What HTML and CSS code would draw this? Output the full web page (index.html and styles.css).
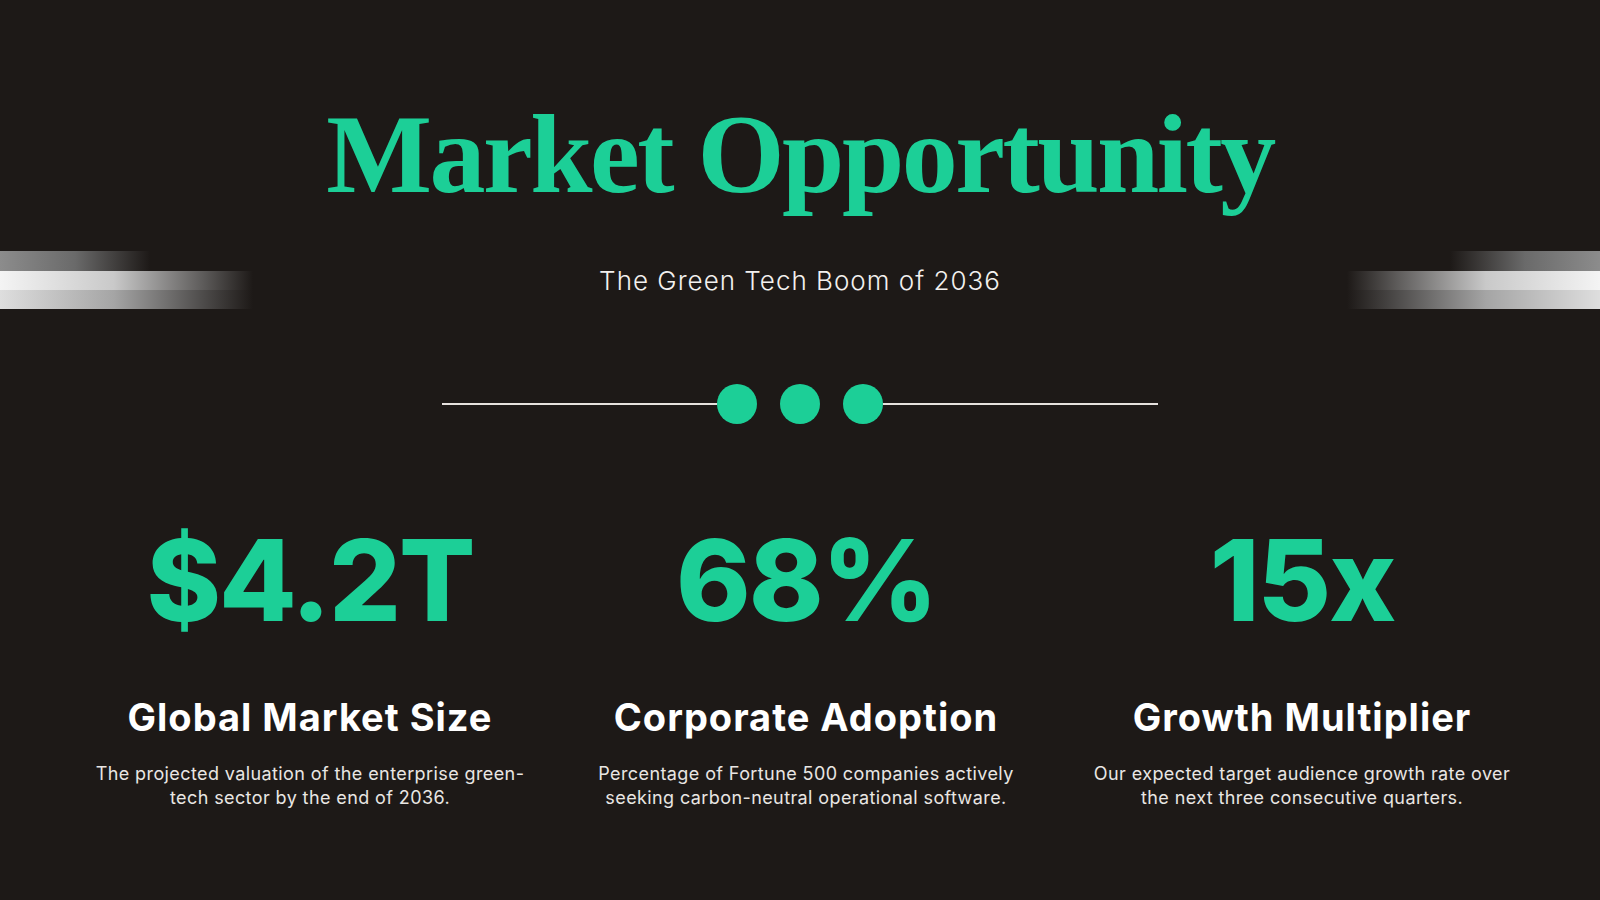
FILE: index.html
```html
<!DOCTYPE html>
<html lang="en">
<head>
<meta charset="utf-8">
<title>Market Opportunity</title>
<link rel="stylesheet" href="styles.css">
</head>
<body>
<main class="slide">
  <h1 class="title">Market Opportunity</h1>
  <div class="band">
    <div class="bars bars-left">
      <span class="bar bar-short"></span>
      <span class="bar bar-long bar-light"></span>
      <span class="bar bar-long bar-mid"></span>
    </div>
    <p class="subtitle">The Green Tech Boom of 2036</p>
    <div class="bars bars-right">
      <span class="bar bar-short"></span>
      <span class="bar bar-long bar-light"></span>
      <span class="bar bar-long bar-mid"></span>
    </div>
  </div>
  <div class="divider">
    <span class="rule"></span>
    <span class="dot"></span>
    <span class="dot"></span>
    <span class="dot"></span>
    <span class="rule"></span>
  </div>
  <section class="stats">
    <article class="stat">
      <div class="stat-value">$4.2T</div>
      <h2 class="stat-title">Global Market Size</h2>
      <p class="stat-text">The projected valuation of the enterprise green-<br>tech sector by the end of 2036.</p>
    </article>
    <article class="stat">
      <div class="stat-value">68%</div>
      <h2 class="stat-title">Corporate Adoption</h2>
      <p class="stat-text">Percentage of Fortune 500 companies actively<br>seeking carbon-neutral operational software.</p>
    </article>
    <article class="stat">
      <div class="stat-value">15x</div>
      <h2 class="stat-title">Growth Multiplier</h2>
      <p class="stat-text">Our expected target audience growth rate over<br>the next three consecutive quarters.</p>
    </article>
  </section>
</main>
</body>
</html>
```

FILE: styles.css
```css
* { box-sizing: border-box; }

html, body {
  margin: 0;
  padding: 0;
  background: #1d1917;
}

.slide {
  width: 1600px;
  height: 900px;
  display: flex;
  flex-direction: column;
  align-items: stretch;
  overflow: hidden;
  background: #1d1917;
  font-family: "Inter", "Liberation Sans", sans-serif;
}

.title {
  margin: 98px 0 0;
  font-family: "Liberation Serif", serif;
  font-weight: 700;
  font-size: 112px;
  line-height: 1;
  letter-spacing: -2.5px;
  color: #1ccf97;
  text-align: center;
}

.band {
  margin-top: 41px;
  height: 58px;
  display: flex;
  align-items: center;
  justify-content: space-between;
}

.bars {
  width: 260px;
  height: 58px;
  display: flex;
  flex-direction: column;
}

.bars-right { align-items: flex-end; }

.bar {
  display: block;
  height: 19px;
}

.bar-short { width: 150px; height: 20px; }
.bar-long { width: 253px; }

.bars-left .bar-short {
  background: linear-gradient(to right, #8c8c8c 0%, #6a6a6a 50%, rgba(29,25,23,0) 100%);
}
.bars-left .bar-light {
  background: linear-gradient(to right, #f4f4f4 0%, #c9c9c9 45%, #5e5c5b 80%, rgba(29,25,23,0) 100%);
}
.bars-left .bar-mid {
  background: linear-gradient(to right, #dedede 0%, #a5a5a5 45%, #4e4c4b 80%, rgba(29,25,23,0) 100%);
}

.bars-right .bar-short {
  background: linear-gradient(to left, #8c8c8c 0%, #6a6a6a 50%, rgba(29,25,23,0) 100%);
}
.bars-right .bar-light {
  background: linear-gradient(to left, #f4f4f4 0%, #c9c9c9 45%, #5e5c5b 80%, rgba(29,25,23,0) 100%);
}
.bars-right .bar-mid {
  background: linear-gradient(to left, #dedede 0%, #a5a5a5 45%, #4e4c4b 80%, rgba(29,25,23,0) 100%);
}

.subtitle {
  margin: 0;
  font-family: "Inter", "Liberation Sans", sans-serif;
  font-weight: 300;
  font-size: 26px;
  letter-spacing: 1px;
  color: #f3f1ef;
}

.divider {
  margin: 75px auto 0;
  width: 716px;
  height: 40px;
  display: flex;
  align-items: center;
}

.rule {
  flex: 1;
  height: 2px;
  background: #e6e2de;
}

.dot {
  width: 40px;
  height: 40px;
  border-radius: 50%;
  background: #1ccf97;
  flex: none;
}

.dot + .dot { margin-left: 23px; }

.stats {
  margin-top: 100px;
  padding: 0 50px 0 62px;
  display: grid;
  grid-template-columns: repeat(3, 1fr);
}

.stat {
  display: flex;
  flex-direction: column;
  align-items: center;
  text-align: center;
}

.stat-value {
  font-family: "Inter", "Liberation Sans", sans-serif;
  font-weight: 800;
  font-size: 113px;
  line-height: 1;
  letter-spacing: -2px;
  color: #1ccf97;
}

.stat-title {
  margin: 61px 0 0;
  font-family: "Inter", "Liberation Sans", sans-serif;
  font-weight: 700;
  font-size: 38px;
  line-height: 1;
  letter-spacing: 1px;
  color: #ffffff;
}

.stat-text {
  margin: 26px 0 0;
  font-family: "Inter", "Liberation Sans", sans-serif;
  font-weight: 400;
  font-size: 18px;
  line-height: 24px;
  letter-spacing: 0.4px;
  color: #e9e6e3;
}
```
